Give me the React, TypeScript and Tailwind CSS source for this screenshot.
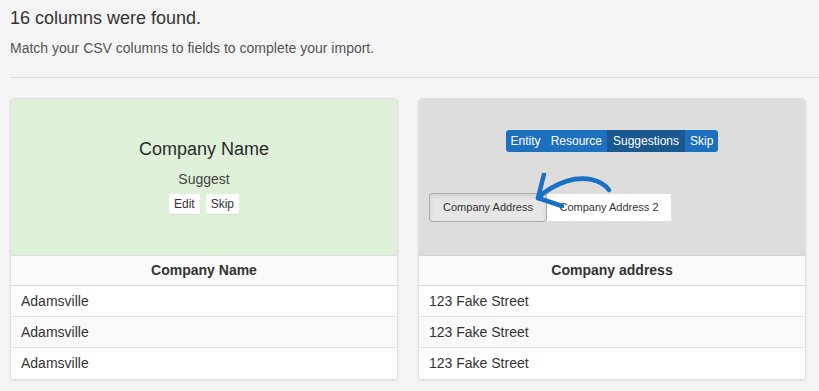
import React from "react";

const rows = ["Adamsville", "Adamsville", "Adamsville"];
const addrRows = ["123 Fake Street", "123 Fake Street", "123 Fake Street"];

function DataTable({ title, items }: { title: string; items: string[] }) {
  return (
    <div className="flex flex-col">
      <div className="h-[30px] flex items-center justify-center bg-[#fafafa] border-b border-[#dddddd] text-[14px] font-bold text-[#333]">
        {title}
      </div>
      {items.map((item, i) => (
        <div
          key={i}
          className={
            "h-[31px] flex items-center pl-[10px] text-[14px] text-[#333] " +
            (i % 2 === 1 ? "bg-[#f9f9f9] " : "bg-white ") +
            (i < items.length - 1 ? "border-b border-[#dddddd]" : "")
          }
        >
          {item}
        </div>
      ))}
    </div>
  );
}

function CurvedArrow() {
  return (
    <svg
      className="absolute left-[100px] top-[-20px] pointer-events-none"
      width="86"
      height="44"
      viewBox="0 0 86 44"
      fill="none"
    >
      <path
        d="M80 17 C 72 6, 55 3, 38 8 C 26 12, 16 18, 9 25"
        stroke="#1a6fc7"
        strokeWidth="4.5"
        strokeLinecap="round"
      />
      <path
        d="M15 1 L 9 25 L 33 33"
        stroke="#1a6fc7"
        strokeWidth="4.5"
        strokeLinecap="round"
        strokeLinejoin="round"
      />
    </svg>
  );
}

export default function App() {
  return (
    <div
      className="w-[819px] h-[391px] overflow-hidden bg-[#f4f4f4] text-[#333]"
      style={{ fontFamily: '"Liberation Sans", Arial, sans-serif' }}
    >
      <div className="pl-[10px] pt-[6px]">
        <h1 className="text-[18px] leading-[24px] font-normal text-[#333]">16 columns were found.</h1>
        <p className="mt-[9px] text-[14px] leading-[18px] text-[#555]">
          Match your CSV columns to fields to complete your import.
        </p>
        <div className="mt-[20px] border-t border-[#dcdcdc]" />
      </div>

      <div className="flex gap-[20px] pl-[10px] pt-[20px]">
        {/* left card */}
        <div className="w-[388px] rounded-[4px] border border-[#dddddd] overflow-hidden shadow-[0_1px_2px_rgba(0,0,0,0.08)] bg-white">
          <div className="h-[157px] bg-[#dff0d8] flex flex-col items-center pt-[40px] border-b border-[#dddddd]">
            <div className="text-[18px] leading-[21px] text-[#2b2b2b]">Company Name</div>
            <div className="mt-[10px] text-[14px] leading-[18px] text-[#444]">Suggest</div>
            <div className="mt-[6px] flex gap-[6px]">
              <button className="h-[20px] px-[5px] bg-white text-[12px] text-[#333] rounded-[2px] shadow-[0_1px_1px_rgba(0,0,0,0.06)]">
                Edit
              </button>
              <button className="h-[20px] px-[5px] bg-white text-[12px] text-[#333] rounded-[2px] shadow-[0_1px_1px_rgba(0,0,0,0.06)]">
                Skip
              </button>
            </div>
          </div>
          <DataTable title="Company Name" items={rows} />
        </div>

        {/* right card */}
        <div className="w-[388px] rounded-[4px] border border-[#dddddd] overflow-hidden shadow-[0_1px_2px_rgba(0,0,0,0.08)] bg-white">
          <div className="h-[157px] bg-[#dddddd] flex flex-col pt-[31px] border-b border-[#d4d4d4]">
            <div className="flex justify-center">
              <div className="flex h-[22px] rounded-[3px] overflow-hidden bg-[#1e6fbe] text-white text-[12px]">
                <span className="px-[5px] flex items-center">Entity</span>
                <span className="px-[5px] flex items-center">Resource</span>
                <span className="px-[6px] flex items-center bg-[#1b5890]">Suggestions</span>
                <span className="px-[5px] flex items-center">Skip</span>
              </div>
            </div>
            <div className="mx-[14px] mt-[20px] border-t border-[#d6d6d6]" />
            <div className="relative mt-[20px] ml-[10px] flex items-center">
              <button className="h-[29px] w-[118px] rounded-[3px] border border-[#adadad] bg-[#e6e6e6] text-[11px] text-[#333] shadow-[inset_0_2px_4px_rgba(0,0,0,0.1)]">
                Company Address
              </button>
              <div className="h-[27px] w-[124px] bg-white flex items-center justify-center text-[11px] text-[#333]">
                Company Address 2
              </div>
              <CurvedArrow />
            </div>
          </div>
          <DataTable title="Company address" items={addrRows} />
        </div>
      </div>
    </div>
  );
}
